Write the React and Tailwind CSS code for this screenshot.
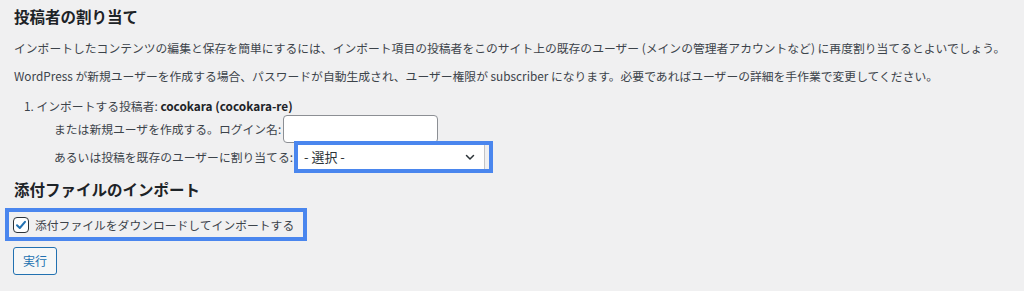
import React from 'react';

const jp = '"Noto Sans CJK JP", "Noto Sans", "Liberation Sans", sans-serif';

export default function App() {
    return (
        <div
            className="w-[1024px] h-[291px] overflow-hidden bg-[#f0f0f1] text-[#3c434a] text-[11.8px] leading-[16px]"
            style={{ fontFamily: jp }}
        >
            <div className="pl-[14px] pt-[5px]">
                <h2 className="text-[15.5px] leading-[22px] font-bold text-[#1d2327]">投稿者の割り当て</h2>

                <p className="mt-[13px]">
                    インポートしたコンテンツの編集と保存を簡単にするには、インポート項目の投稿者をこのサイト上の既存のユーザー (メインの管理者アカウントなど) に再度割り当てるとよいでしょう。
                </p>
                <p className="mt-[12px]">
                    WordPress が新規ユーザーを作成する場合、パスワードが自動生成され、ユーザー権限が subscriber になります。必要であればユーザーの詳細を手作業で変更してください。
                </p>

                <ol className="mt-[14px] pl-[10px]">
                    <li>
                        <div>
                            1. インポートする投稿者: <strong className="font-semibold text-[#1d2327]">cocokara (cocokara-re)</strong>
                        </div>
                        <div className="pl-[30px] mt-[1px] flex items-center">
                            <span>または新規ユーザを作成する。ログイン名:</span>
                            <input
                                type="text"
                                className="ml-[2px] w-[155px] h-[28px] bg-white border border-[#8c8f94] rounded-[4px]"
                            />
                        </div>
                        <div className="pl-[30px] -mt-[2px] flex items-center">
                            <span>あるいは投稿を既存のユーザーに割り当てる:</span>
                            <div className="ml-[1px] w-[199px] h-[32px] border-[4px] border-[#4a86ee] flex">
                                <div className="flex-1 bg-white border-r border-[#c3c4c7] mr-[4px] flex items-center justify-between pl-[6px] pr-[8px] text-[13px] text-[#2c3338]">
                                    <span>- 選択 -</span>
                                    <svg width="12" height="12" viewBox="0 0 12 12" fill="none">
                                        <path d="M2.5 4.5 6 8l3.5-3.5" stroke="#2c3338" strokeWidth="1.5" strokeLinecap="round" strokeLinejoin="round" />
                                    </svg>
                                </div>
                            </div>
                        </div>
                    </li>
                </ol>

                <h2 className="mt-[5px] text-[15.5px] leading-[22px] font-bold text-[#1d2327]">添付ファイルのインポート</h2>
            </div>

            <div className="ml-[5px] mt-[8px] w-[302px] h-[33px] border-[4px] border-[#4a86ee] flex items-center pl-[4px]">
                <span className="w-[16px] h-[16px] rounded-[4px] border border-[#2c3338] bg-white flex items-center justify-center">
                    <svg width="14" height="14" viewBox="0 0 14 14" fill="none">
                        <path d="M3 7.2 5.8 10 11 3.8" stroke="#2271b1" strokeWidth="2" strokeLinecap="round" strokeLinejoin="round" />
                    </svg>
                </span>
                <span className="ml-[6px]">添付ファイルをダウンロードしてインポートする</span>
            </div>

            <div className="pl-[13px] mt-[6px]">
                <button className="w-[44px] h-[28px] rounded-[3px] border border-[#2271b1] bg-[#f6f7f7] text-[#2271b1] text-[12px]">
                    実行
                </button>
            </div>
        </div>
    );
}
